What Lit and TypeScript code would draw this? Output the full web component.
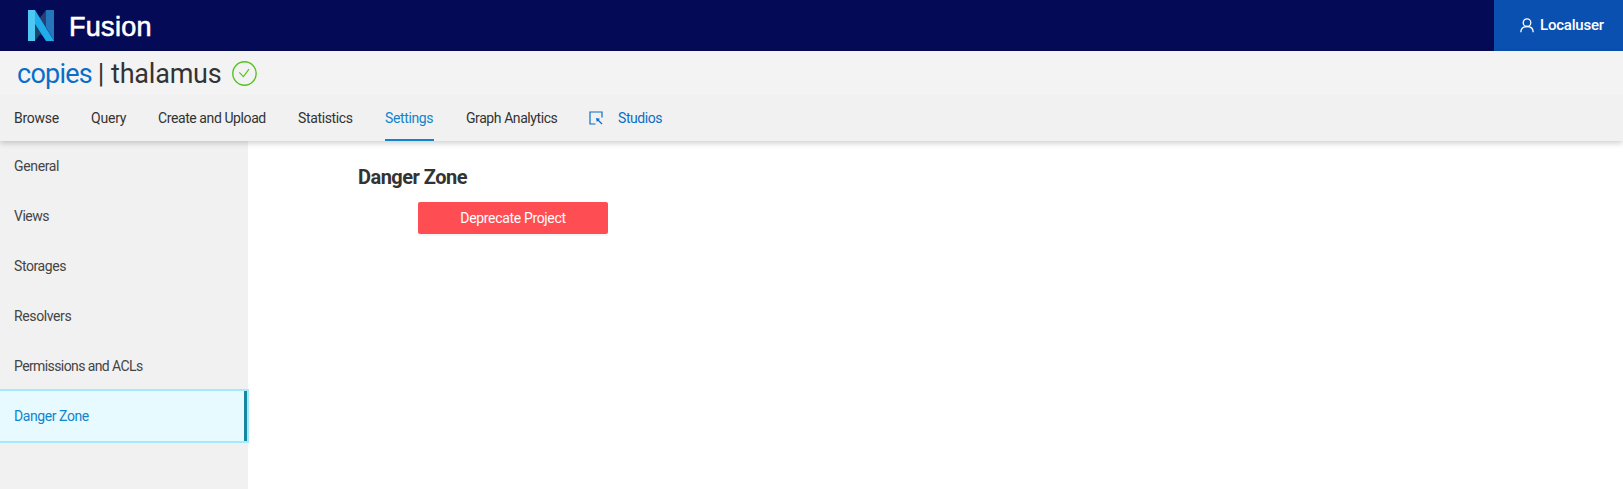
import { LitElement, html, css } from "lit";
import { customElement } from "lit/decorators.js";
import { classMap } from "lit/directives/class-map.js";
import { styleMap } from "lit/directives/style-map.js";

interface Item {
  label: string;
  width?: number;
  spacing: number;
  active?: boolean;
}

const TABS: Item[] = [
  { label: "Browse", width: 45, spacing: -0.26 },
  { label: "Query", width: 35, spacing: -0.2 },
  { label: "Create and Upload", width: 108, spacing: -0.41 },
  { label: "Statistics", width: 55, spacing: -0.36 },
  { label: "Settings", width: 49, spacing: -0.36, active: true },
  { label: "Graph Analytics", width: 91, spacing: -0.42 },
];

const SECTIONS: Item[] = [
  { label: "General", spacing: -0.35 },
  { label: "Views", spacing: -0.5 },
  { label: "Storages", spacing: -0.42 },
  { label: "Resolvers", spacing: -0.38 },
  { label: "Permissions and ACLs", spacing: -0.6 },
  { label: "Danger Zone", spacing: -0.42, active: true },
];

@customElement("fusion-header")
class FusionHeader extends LitElement {
  static styles = css`
    :host { display: flex; justify-content: space-between; height: 51px; background: #050a56; color: #fff; }
    .brand { display: flex; align-items: center; padding-left: 28px; }
    .logo { width: 26px; height: 32px; display: block; }
    .name { margin-left: 15px; font: 27px/51px "Liberation Sans", sans-serif; -webkit-text-stroke: 0.6px #fff; padding-top: 3px; height: 50px; letter-spacing: 0.3px; }
    .user { display: flex; align-items: center; box-sizing: border-box; width: 129px; padding-left: 26px; background: #0a50b1; }
    .user svg { width: 14px; height: 15px; margin-right: 6px; }
    .user span { font: 500 15px/51px Roboto, sans-serif; height: 51px; letter-spacing: -0.2px; white-space: nowrap; }
  `;
  render() {
    return html`
      <div class="brand">
        <svg class="logo" viewBox="0 0 26 32">
          <path d="M7 0 26 31V32L7 22Z" fill="#1b2c62" />
          <path d="M18 0H26V31L16 14Z" fill="#2377ba" />
          <path d="M11 9 18 0V19Z" fill="#273e76" />
          <path d="M7 12V31L14 22Z" fill="#18466f" />
          <path d="M0 0H7L26 31H18L0 3Z" fill="#20adeb" />
          <path d="M0 0H7V31H0Z" fill="#4fc7f3" />
        </svg>
        <span class="name">Fusion</span>
      </div>
      <div class="user">
        <svg viewBox="0 0 14 15" fill="none" stroke="#fff" stroke-width="1.3">
          <circle cx="7" cy="4.7" r="3.8" />
          <path d="M0.8 14.2C0.9 10.7 3.2 8.5 7 8.5s6.1 2.2 6.2 5.7" />
        </svg>
        <span>Localuser</span>
      </div>
    `;
  }
}

@customElement("project-bar")
class ProjectBar extends LitElement {
  static styles = css`
    :host { display: block; position: relative; z-index: 1; height: 90px; background: #f1f1f1; box-shadow: 0 2px 6px rgba(0, 0, 0, 0.2); font-family: Roboto, sans-serif; color: #333; }
    .title { display: flex; align-items: center; height: 44px; padding-left: 17px; background: #f3f3f3; font-size: 27px; line-height: 44px; white-space: pre; }
    .title span { padding-top: 2px; }
    .org { width: 74px; color: #0a6ec8; letter-spacing: -0.75px; }
    .bar { width: 20px; text-align: center; }
    .project { width: 110px; letter-spacing: -0.2px; }
    .check { width: 25px; height: 25px; margin-left: 11px; }
    .tabs { display: flex; gap: 32px; height: 46px; padding-left: 14px; }
    .tab { box-sizing: border-box; height: 46px; font-size: 14px; line-height: 46px; white-space: nowrap; border-bottom: 2px solid transparent; }
    .active { color: #1283cc; border-bottom-color: #1283cc; }
    .studios { display: flex; align-items: center; height: 46px; color: #0a6ec8; font-size: 14px; letter-spacing: -0.42px; }
    .studios svg { width: 14px; height: 14px; margin-right: 15px; }
  `;
  render() {
    return html`
      <div class="title"><span class="org">copies</span><span class="bar">|</span><span class="project">thalamus</span><svg
          class="check" viewBox="0 0 25 25" fill="none" stroke="#52c41a">
          <circle cx="12.5" cy="12.5" r="11.7" stroke-width="1.4" />
          <path d="M7.3 11.3 11.4 15.7 17 8.2" stroke-width="1.1" />
        </svg></div>
      <nav class="tabs">
        ${TABS.map((t) => html`<a class=${classMap({ tab: true, active: !!t.active })}
          style=${styleMap({ width: `${t.width}px`, letterSpacing: `${t.spacing}px` })}>${t.label}</a>`)}
        <a class="studios">
          <svg viewBox="0 0 14 14" fill="none" stroke="#0a6ec8">
            <path d="M13 6.5V1H1V13H6.5" stroke-width="1.2" />
            <path d="M8.5 8.5 13 13" stroke-width="1.2" />
            <path d="M7 7 11 7.8 7.8 11Z" fill="#0a6ec8" stroke="none" />
          </svg><span>Studios</span>
        </a>
      </nav>
    `;
  }
}

@customElement("settings-menu")
class SettingsMenu extends LitElement {
  static styles = css`
    :host { display: block; width: 248px; flex: none; background: #f1f1f1; font-family: Roboto, sans-serif; }
    .item { box-sizing: border-box; height: 50px; padding-left: 14px; font-size: 14px; line-height: 50px; color: #444; white-space: nowrap; }
    .active { width: 247px; background: #e6faff; color: #1283cc; border-right: 3px solid #16879f; box-shadow: 0 0 0 2px #a4e9fc; }
  `;
  render() {
    return html`${SECTIONS.map((s) => html`<div class=${classMap({ item: true, active: !!s.active })}
      style=${styleMap({ letterSpacing: `${s.spacing}px` })}>${s.label}</div>`)}`;
  }
}

@customElement("app-root")
class AppRoot extends LitElement {
  static styles = css`
    :host { display: flex; flex-direction: column; height: 489px; overflow: hidden; background: #fff; font-family: Roboto, sans-serif; color: #333; }
    .body { display: flex; flex: 1; }
    main { padding: 20px 0 0 110px; }
    h3 { margin: 0; font-size: 20px; line-height: 32px; font-weight: 700; letter-spacing: -0.52px; }
    button { display: block; margin: 9px 0 0 60px; padding: 0; width: 190px; height: 32px; border: 0; border-radius: 2px; background: #ff4d54; color: #fff; font: 14px/32px Roboto, sans-serif; letter-spacing: -0.34px; box-shadow: 0 2px 0 #f5f5f5; }
  `;
  render() {
    return html`
      <fusion-header></fusion-header>
      <project-bar></project-bar>
      <div class="body">
        <settings-menu></settings-menu>
        <main>
          <h3>Danger Zone</h3>
          <button>Deprecate Project</button>
        </main>
      </div>
    `;
  }
}
